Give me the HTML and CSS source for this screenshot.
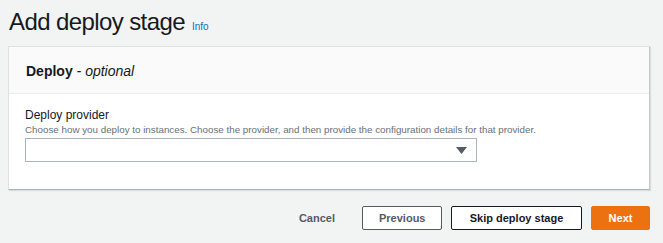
FILE: index.html
```html
<!DOCTYPE html>
<html lang="en">
	<head>
		<meta charset="UTF-8" />
		<title>Add deploy stage</title>
		<link rel="stylesheet" href="styles.css">
	</head>
	<body>
		<div class="page">
			<div class="page-header">
				<h1>Add deploy stage</h1>
				<a href="#" class="info-link">Info</a>
			</div>

			<div class="card">
				<div class="card-header">
					<h2>Deploy <span class="optional">- optional</span></h2>
				</div>
				<div class="card-body">
					<label for="provider">Deploy provider</label>
					<p class="hint">Choose how you deploy to instances. Choose the provider, and then provide the configuration details for that provider.</p>
					<div class="select">
						<span class="select-value"></span>
						<svg class="caret" width="11" height="7" viewBox="0 0 11 7">
							<path d="M0 0 H11 L5.5 7 Z" fill="#545b64" />
						</svg>
					</div>
				</div>
			</div>

			<div class="actions">
				<button class="btn btn-link">Cancel</button>
				<button class="btn btn-normal">Previous</button>
				<button class="btn btn-normal btn-dark">Skip deploy stage</button>
				<button class="btn btn-primary">Next</button>
			</div>
		</div>
	</body>
</html>
```

FILE: styles.css
```css
* {
	margin: 0;
	padding: 0;
	box-sizing: border-box;
}

body {
	font-family: "Liberation Sans", Arial, sans-serif;
	background-color: #f2f3f3;
	color: #16191f;
	width: 663px;
	height: 243px;
	overflow: hidden;
}

.page {
	padding: 6px 13px 0 8px;
}

.page-header {
	display: flex;
	align-items: baseline;
	gap: 7px;
	padding-left: 1px;
	height: 40px;
}

h1 {
	font-size: 24px;
	font-weight: 400;
	letter-spacing: -0.6px;
	line-height: 32px;
	color: #16191f;
}

.info-link {
	font-size: 10px;
	font-weight: 400;
	color: #0073bb;
	text-decoration: none;
}

.card {
	background-color: #fff;
	border: 1px solid #dfe2e2;
	border-right-color: #c5c9c9;
	border-bottom: 1px solid #aab7b8;
	box-shadow: 1px 1px 1px rgba(0, 22, 22, 0.1);
}

.card-header {
	background-color: #fafafa;
	border-bottom: 1px solid #eaeded;
	height: 47px;
	padding: 15px 17px 0;
}

h2 {
	font-size: 14px;
	font-weight: 700;
	line-height: 18px;
}

.optional {
	font-weight: 400;
	font-style: italic;
}

.card-body {
	padding: 14px 16px 27px;
}

label {
	display: block;
	font-size: 12px;
	line-height: 15px;
	color: #16191f;
}

.hint {
	font-size: 9.8px;
	line-height: 13px;
	color: #687078;
	margin-bottom: 2px;
}

.select {
	width: 452px;
	height: 24px;
	border: 1px solid #aab7b8;
	display: flex;
	align-items: center;
	justify-content: flex-end;
	padding-right: 9px;
}

.actions {
	display: flex;
	justify-content: flex-end;
	align-items: center;
	gap: 9px;
	margin-top: 16px;
}

.btn {
	font-family: inherit;
	font-size: 11px;
	font-weight: 700;
	height: 24px;
	border-radius: 2px;
	cursor: pointer;
	padding: 0 16px;
}

.btn-link {
	background: none;
	border: none;
	color: #545b64;
	padding: 0 18px 0 0;
}

.btn-normal {
	background-color: #fff;
	border: 1px solid #545b64;
	color: #545b64;
	width: 80px;
}

.btn-dark {
	border-color: #16191f;
	color: #16191f;
	width: 131px;
}

.btn-primary {
	background-color: #ec7211;
	border: 1px solid #ec7211;
	color: #fff;
	width: 59px;
}
```
